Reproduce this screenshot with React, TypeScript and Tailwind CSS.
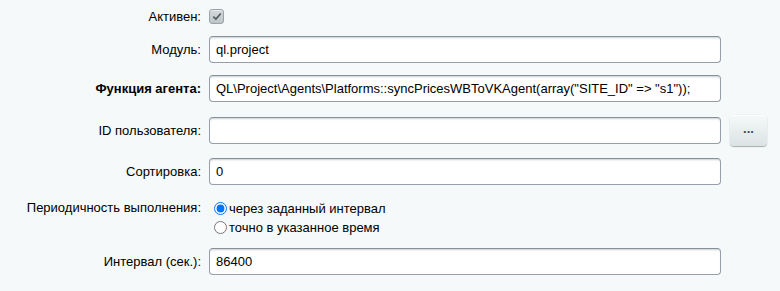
import React from "react";

const inputCls =
  "h-[27px] w-[512px] rounded-[4px] border border-[#959ea9] border-t-[#87919c] bg-white px-[6px] text-[13px] text-black outline-none shadow-[inset_0_2px_2px_-1px_rgba(180,188,191,0.7)]";

const Label = ({ children, bold }: { children: React.ReactNode; bold?: boolean }) => (
  <div className={"w-[209px] shrink-0 pr-[8px] text-right " + (bold ? "font-bold" : "")}>{children}</div>
);

const App = () => {
  return (
    <div
      className="h-[291px] w-[780px] overflow-hidden bg-[#f5f9f9] text-[13px] leading-[15px] text-black"
      style={{ fontFamily: '"Liberation Sans", Arial, sans-serif' }}
    >
      <div className="flex h-[14px] items-center pt-0 mt-[9px]">
        <Label>Активен:</Label>
        <span className="flex h-[15px] w-[15px] items-center justify-center rounded-[3px] border border-[#9aa3a7] bg-gradient-to-b from-[#d4dbdd] to-[#bcc5c8] shadow-[inset_0_1px_0_rgba(255,255,255,0.4)]">
          <svg width="10" height="9" viewBox="0 0 10 9">
            <path d="M1.3 4.6 L3.9 7.1 L8.8 1.4" fill="none" stroke="#54595c" strokeWidth="1.6" />
          </svg>
        </span>
      </div>

      <div className="mt-[13px] flex items-center">
        <Label>Модуль:</Label>
        <input className={inputCls} defaultValue="ql.project" />
      </div>

      <div className="mt-[12px] flex items-center">
        <Label bold>Функция агента:</Label>
        <input
          className={inputCls}
          defaultValue={'QL\\Project\\Agents\\Platforms::syncPricesWBToVKAgent(array("SITE_ID" => "s1"));'}
        />
      </div>

      <div className="mt-[13px] flex h-[31px] items-center">
        <Label>ID пользователя:</Label>
        <input className={inputCls} defaultValue="" />
        <button className="ml-[9px] h-[31px] w-[37px] rounded-[4px] bg-gradient-to-b from-[#f6f9f9] to-[#dbe3e4] pb-[4px] text-[13px] font-bold text-[#3f4b54] shadow-[0_0_1px_rgba(0,0,0,0.2),0_1px_1px_rgba(0,0,0,0.3),inset_0_1px_0_#fff]">
          ...
        </button>
      </div>

      <div className="mt-[12px] flex items-center">
        <Label>Сортировка:</Label>
        <input className={inputCls} defaultValue="0" />
      </div>

      <div className="mt-[14px] flex items-start">
        <div className="w-[209px] shrink-0 pr-[8px] pt-[1px] text-right">Периодичность выполнения:</div>
        <div className="flex flex-col">
          <label className="flex h-[19px] items-center">
            <input type="radio" name="period" defaultChecked className="m-0 ml-[5px] h-[13px] w-[13px] accent-[#0075ff]" />
            <span className="ml-[2px]">через заданный интервал</span>
          </label>
          <label className="flex h-[19px] items-center">
            <input type="radio" name="period" className="m-0 ml-[5px] h-[13px] w-[13px]" />
            <span className="ml-[2px]">точно в указанное время</span>
          </label>
        </div>
      </div>

      <div className="mt-[11px] flex items-center">
        <Label>Интервал (сек.):</Label>
        <input className={inputCls} defaultValue="86400" />
      </div>
    </div>
  );
};

export default App;
